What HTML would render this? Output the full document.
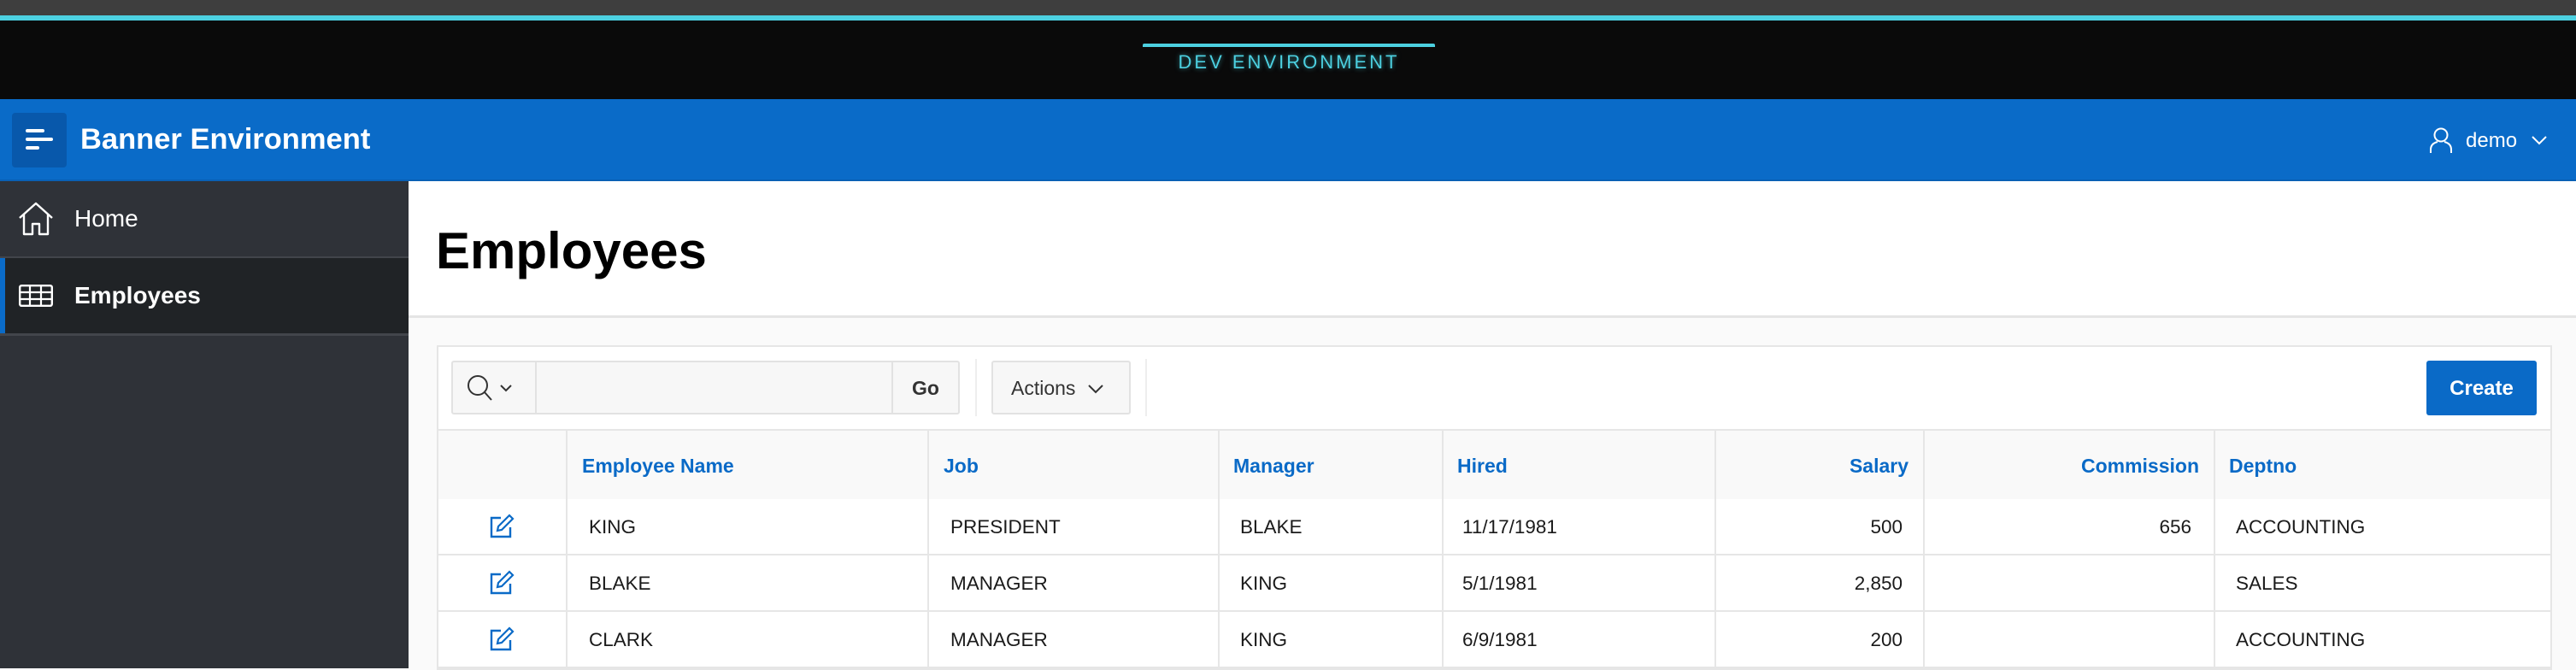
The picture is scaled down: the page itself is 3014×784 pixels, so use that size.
<!DOCTYPE html>
<html><head><meta charset="utf-8"><style>
*{margin:0;padding:0;box-sizing:border-box}
body{width:3014px;height:782px;overflow:hidden;background:#fafafa;font-family:"Liberation Sans",sans-serif;position:relative}
.a{position:absolute}
.h{color:#0a6ac7;font-weight:bold;font-size:23px;top:532px}
.d{color:#1a1a1a;font-size:22.5px}
.vl{position:absolute;top:503px;width:2px;height:279px;background:#e6e6e6}
.hl{position:absolute;left:512px;width:2472px;height:2px;background:#e6e6e6}
</style></head><body>
<div class="a" style="left:0;top:0;width:3014px;height:18px;background:#3e3e3e"></div>
<div class="a" style="left:0;top:18px;width:3014px;height:6px;background:#4cd0e0"></div>
<div class="a" style="left:0;top:24px;width:3014px;height:92px;background:#0a0a0a"></div>
<div class="a" style="left:1337px;top:51px;width:342px;height:4px;background:#4cd0e0;border-radius:2px 2px 0 0"></div>
<div class="a" style="left:1338px;top:60px;width:340px;text-align:center;color:#4cd0e0;font-size:22px;letter-spacing:3px;text-shadow:0 0 6px rgba(76,208,224,.6)">DEV ENVIRONMENT</div>
<div class="a" style="left:0;top:116px;width:3014px;height:96px;background:#0a6bc8;border-bottom:2px solid #0960b5"></div>
<div class="a" style="left:14px;top:132px;width:64px;height:64px;background:#0858ab;border-radius:4px"></div>
<div class="a" style="left:30px;top:151px;width:22px;height:4px;background:#fff;border-radius:2px"></div>
<div class="a" style="left:30px;top:161px;width:32px;height:4px;background:#fff;border-radius:2px"></div>
<div class="a" style="left:30px;top:171px;width:16px;height:4px;background:#fff;border-radius:2px"></div>
<div class="a" style="left:94px;top:144px;color:#fff;font-size:34.5px;font-weight:bold">Banner Environment</div>
<svg class="a" style="left:2842px;top:148px" width="28" height="32" viewBox="0 0 28 32"><circle cx="14" cy="10" r="7.5" fill="none" stroke="#fff" stroke-width="2"/><path d="M2 31 V27 Q2 20 10 18 M26 31 V27 Q26 20 18 18" fill="none" stroke="#fff" stroke-width="2"/></svg>
<div class="a" style="left:2885px;top:151px;color:#fff;font-size:24px">demo</div>
<svg class="a" style="left:2962px;top:158px" width="18" height="12"><path d="M1 2 L9 10 L17 2" fill="none" stroke="#fff" stroke-width="2"/></svg>
<div class="a" style="left:0;top:212px;width:478px;height:570px;background:#2f3238"></div>
<div class="a" style="left:0;top:300px;width:478px;height:2px;background:#42454b"></div>
<div class="a" style="left:0;top:302px;width:478px;height:88px;background:#202326"></div>
<div class="a" style="left:0;top:302px;width:6px;height:88px;background:#0a6bc8"></div>
<div class="a" style="left:0;top:390px;width:478px;height:3px;background:#42454b"></div>
<svg class="a" style="left:21px;top:236px" width="42" height="40" viewBox="0 0 42 40"><path d="M2 19 L21 2 L40 19 M7 15 V38 H17 V26 H25 V38 H35 V15" fill="none" stroke="#fff" stroke-width="2.4" stroke-linejoin="round"/></svg>
<div class="a" style="left:87px;top:240px;color:#fff;font-size:28px">Home</div>
<svg class="a" style="left:22px;top:333px" width="40" height="26" viewBox="0 0 40 26"><rect x="1.2" y="1.2" width="37.6" height="23.6" rx="2" fill="none" stroke="#fff" stroke-width="2.4"/><path d="M1 9 H39 M1 17 H39 M13 1 V25 M26 1 V25" stroke="#fff" stroke-width="2.2"/></svg>
<div class="a" style="left:87px;top:330px;color:#fff;font-size:28px;font-weight:bold">Employees</div>
<div class="a" style="left:478px;top:212px;width:2536px;height:160px;background:#fff;border-bottom:3px solid #e4e4e4"></div>
<div class="a" style="left:510px;top:259px;font-size:60px;font-weight:bold;color:#000">Employees</div>
<div class="a" style="left:511px;top:404px;width:2475px;height:380px;background:#fff;border:2px solid #e6e6e6"></div>
<div class="a" style="left:528px;top:422px;width:595px;height:63px;background:#f7f7f7;border:2px solid #e2e2e2;border-radius:3px"></div>
<div class="a" style="left:626px;top:422px;width:2px;height:63px;background:#e2e2e2"></div>
<div class="a" style="left:1043px;top:422px;width:2px;height:63px;background:#e2e2e2"></div>
<svg class="a" style="left:545px;top:437px" width="60" height="34"><circle cx="14" cy="14" r="11" fill="none" stroke="#333" stroke-width="2"/><path d="M22 22 L30 31 M41 14 L47 20 L53 14" fill="none" stroke="#333" stroke-width="2"/></svg>
<div class="a" style="left:1043px;top:441px;width:80px;text-align:center;font-size:23px;font-weight:bold;color:#333">Go</div>
<div class="a" style="left:1141px;top:420px;width:2px;height:67px;background:#eee"></div>
<div class="a" style="left:1160px;top:422px;width:163px;height:63px;background:#f7f7f7;border:2px solid #e2e2e2;border-radius:3px"></div>
<div class="a" style="left:1183px;top:441px;font-size:23px;color:#333">Actions</div>
<svg class="a" style="left:1273px;top:449px" width="18" height="12"><path d="M1 2 L9 10 L17 2" fill="none" stroke="#333" stroke-width="2"/></svg>
<div class="a" style="left:1340px;top:420px;width:2px;height:67px;background:#eee"></div>
<div class="a" style="left:2839px;top:422px;width:129px;height:64px;background:#0a6ac7;border-radius:3px;color:#fff;font-size:24px;font-weight:bold;text-align:center;line-height:66px">Create</div>
<div class="a" style="left:513px;top:503px;width:2471px;height:81px;background:#f9f9f9"></div>
<div class="hl" style="top:502px"></div>
<div class="hl" style="top:648px"></div>
<div class="hl" style="top:714px"></div>
<div class="hl" style="top:780px"></div>
<div class="vl" style="left:662px"></div><div class="vl" style="left:1085px"></div><div class="vl" style="left:1425px"></div><div class="vl" style="left:1687px"></div><div class="vl" style="left:2006px"></div><div class="vl" style="left:2250px"></div><div class="vl" style="left:2590px"></div>
<div class="a h" style="left:681px">Employee Name</div>
<div class="a h" style="left:1104px">Job</div>
<div class="a h" style="left:1443px">Manager</div>
<div class="a h" style="left:1705px">Hired</div>
<div class="a h" style="right:781px">Salary</div>
<div class="a h" style="right:441px">Commission</div>
<div class="a h" style="left:2608px">Deptno</div>
<svg class="a" style="left:572px;top:601px" width="30" height="30" viewBox="0 0 30 30"><path d="M14 5 H3 V27 H25 V16" fill="none" stroke="#0a6ac7" stroke-width="2.4"/><path d="M10 20 L11 15 L24 2 L28 6 L15 19 Z" fill="none" stroke="#0a6ac7" stroke-width="2.2"/></svg>
<svg class="a" style="left:572px;top:667px" width="30" height="30" viewBox="0 0 30 30"><path d="M14 5 H3 V27 H25 V16" fill="none" stroke="#0a6ac7" stroke-width="2.4"/><path d="M10 20 L11 15 L24 2 L28 6 L15 19 Z" fill="none" stroke="#0a6ac7" stroke-width="2.2"/></svg>
<svg class="a" style="left:572px;top:733px" width="30" height="30" viewBox="0 0 30 30"><path d="M14 5 H3 V27 H25 V16" fill="none" stroke="#0a6ac7" stroke-width="2.4"/><path d="M10 20 L11 15 L24 2 L28 6 L15 19 Z" fill="none" stroke="#0a6ac7" stroke-width="2.2"/></svg>
<div class="a d" style="top:604px;left:689px">KING</div><div class="a d" style="top:604px;left:1112px">PRESIDENT</div><div class="a d" style="top:604px;left:1451px">BLAKE</div><div class="a d" style="top:604px;left:1711px">11/17/1981</div><div class="a d" style="top:604px;right:788px">500</div><div class="a d" style="top:604px;right:450px">656</div><div class="a d" style="top:604px;left:2616px">ACCOUNTING</div>
<div class="a d" style="top:670px;left:689px">BLAKE</div><div class="a d" style="top:670px;left:1112px">MANAGER</div><div class="a d" style="top:670px;left:1451px">KING</div><div class="a d" style="top:670px;left:1711px">5/1/1981</div><div class="a d" style="top:670px;right:788px">2,850</div><div class="a d" style="top:670px;left:2616px">SALES</div>
<div class="a d" style="top:736px;left:689px">CLARK</div><div class="a d" style="top:736px;left:1112px">MANAGER</div><div class="a d" style="top:736px;left:1451px">KING</div><div class="a d" style="top:736px;left:1711px">6/9/1981</div><div class="a d" style="top:736px;right:788px">200</div><div class="a d" style="top:736px;left:2616px">ACCOUNTING</div>
</body></html>
